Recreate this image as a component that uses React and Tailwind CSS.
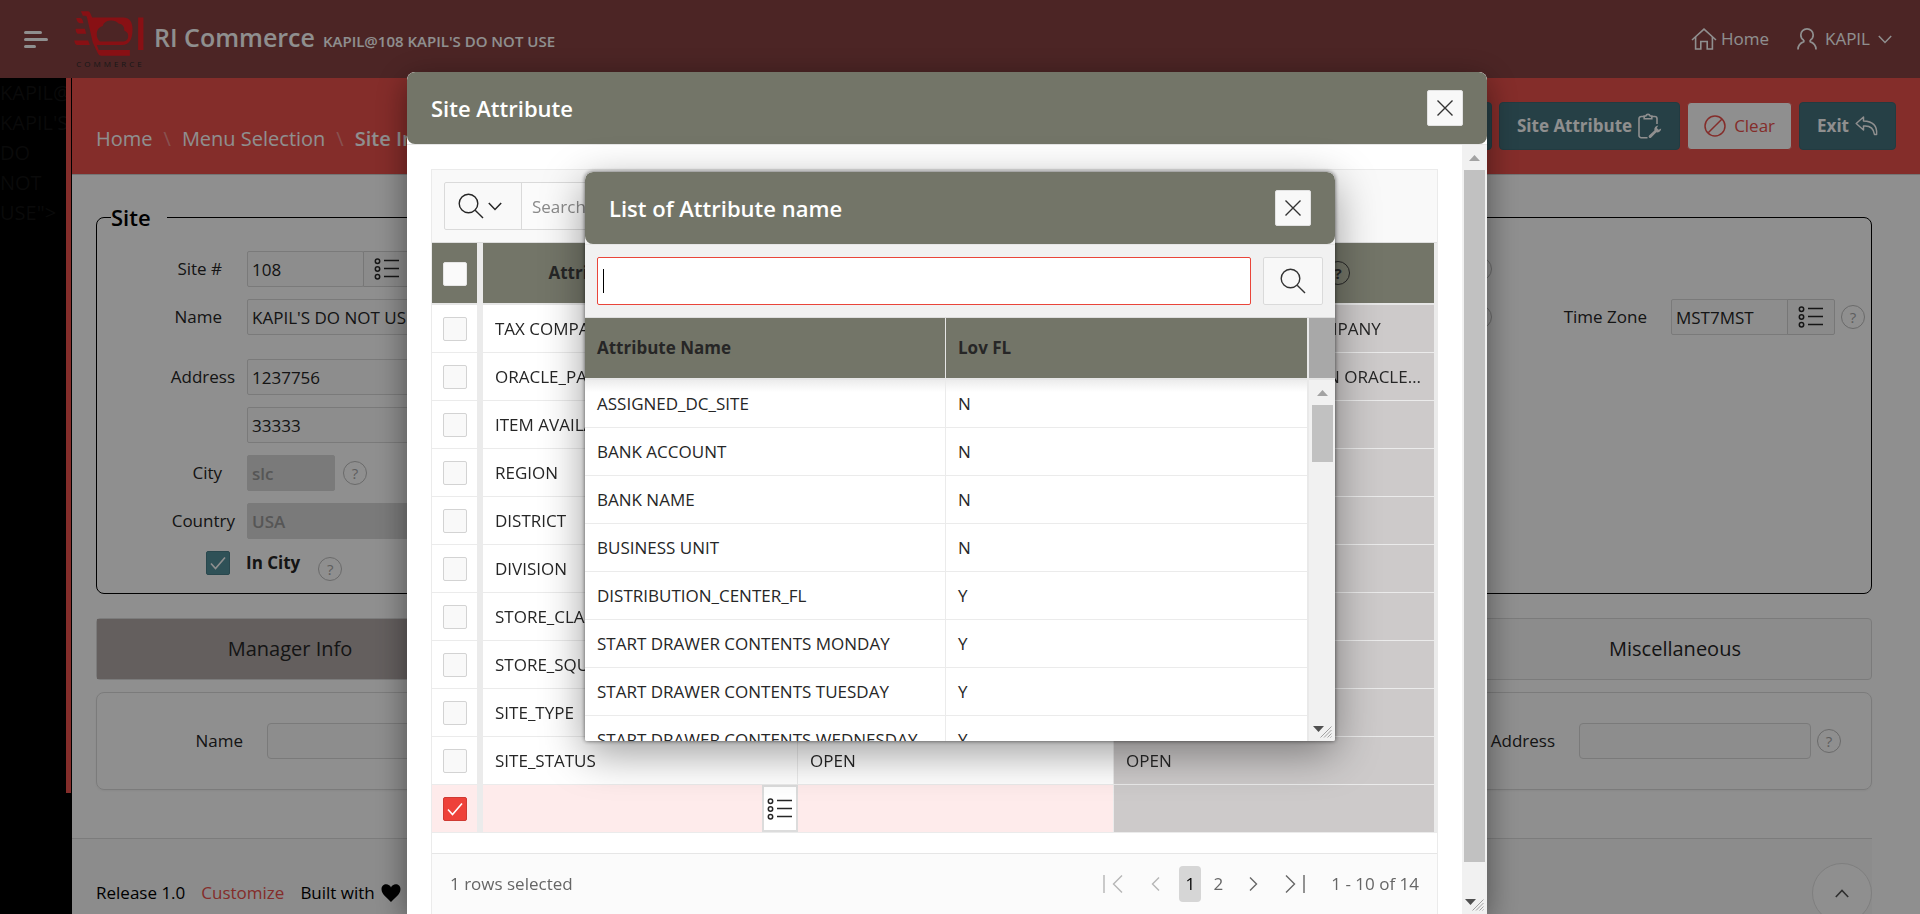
import React from 'react';

const Svg = ({ w, h, sw = 1.4, className = '', children }) => (
  <svg
    width={w}
    height={h}
    viewBox={`0 0 ${w} ${h}`}
    fill="none"
    stroke="currentColor"
    strokeWidth={sw}
    className={`shrink-0 ${className}`}
    aria-hidden="true"
  >
    {children}
  </svg>
);

const ListIcon = () => (
  <Svg w={26} h={22} sw={1.5}>
    <circle cx="3.5" cy="3.2" r="2.2" />
    <circle cx="3.5" cy="11" r="2.2" />
    <circle cx="3.5" cy="18.8" r="2.2" />
    <path d="M10 2.5H25M10 10.5H25M10 18.5H25" />
  </Svg>
);

const SearchIcon = () => (
  <Svg w={26} h={26} sw={1.4}>
    <circle cx="10.5" cy="10.5" r="9.3" />
    <path d="M17.2 17.2 25 25" />
  </Svg>
);

const CloseIcon = () => (
  <Svg w={16} h={16} sw={1.4}>
    <path d="M0.5 0.5 15.5 15.5M15.5 0.5 0.5 15.5" />
  </Svg>
);

const ChevronDown = () => (
  <Svg w={14} h={9} sw={1.5}>
    <path d="M0.8 1 7 7.5 13.2 1" />
  </Svg>
);

const HomeIcon = () => (
  <Svg w={26} h={22} sw={1.6}>
    <path d="M1 12 13 1.2 25 12" />
    <path d="M4.6 9V21H9.8V13.5H16.2V21H21.4V9" />
  </Svg>
);

const UserIcon = () => (
  <Svg w={20} h={22} sw={1.7}>
    <path d="M6.8 12.2C4.6 10.8 3.8 8.8 3.8 6.9A6.2 6 0 0 1 16.2 6.9C16.2 8.8 15.4 10.8 13.2 12.2" />
    <path d="M1 21.5C1 17 3.2 15 6.8 13.6V12M19 21.5C19 17 16.8 15 13.2 13.6V12" />
  </Svg>
);

const ClipboardIcon = () => (
  <Svg w={24} h={26} sw={1.6}>
    <path d="M6 3.5H3.2A2.2 2.2 0 0 0 1 5.7V22.5A2.2 2.2 0 0 0 3.2 24.7H9.5" />
    <path d="M14 3.5H16.8A2.2 2.2 0 0 1 19 5.7V11" />
    <path d="M6.2 5.8V3H7.8A2.3 2.3 0 0 1 12.2 3H13.8V5.8Z" />
    <path
      d="M11 22.6 16.4 17.4A4 4 0 0 1 20.3 12.4L18.8 15 20.6 16.8 23.2 15.4A4 4 0 0 1 18.4 19.3L13 24.8A1.5 1.5 0 0 1 11 22.6Z"
      fill="currentColor"
      stroke="none"
    />
  </Svg>
);

const BanIcon = () => (
  <Svg w={22} h={22} sw={1.5}>
    <circle cx="11" cy="11" r="10" />
    <path d="M4.2 17.8 17.8 4.2" />
  </Svg>
);

const ReplyIcon = () => (
  <Svg w={23} h={20} sw={1.5}>
    <path
      d="M8.5 1 1.2 7.5 8.5 14V10C13.5 9.5 18.5 11 19.5 18.5H21.6C22.4 10 18 5.2 8.5 5Z"
      strokeLinejoin="round"
    />
  </Svg>
);

const CheckIcon = () => (
  <Svg w={16} h={14} sw={1.6} className="pointer-events-none col-start-1 row-start-1">
    <path d="M1 7.5 5.5 12.5 15 1.5" />
  </Svg>
);

const Grip = () => (
  <Svg w={12} h={12} sw={1} className="text-neutral-400">
    <path d="M0.5 11.5 11.5 0.5M4 11.5 11.5 4M7.5 11.5 11.5 7.5M10.5 11.5 11.5 10.5" />
  </Svg>
);

const Logo = () => (
  <div className="flex w-[70px] shrink-0 flex-col items-center">
    <svg width="70" height="45" viewBox="42 33 210 136" aria-hidden="true" fill="#f21d24">
      <path
        fillRule="evenodd"
        d="M62 34H84Q88 34 90 39L96 53H190Q218 53 218 90Q218 136 186 136H110L116 151H210V168H124Q117 168 114 162L98 128L80 50Q79 47 74 47H68ZM120 125H192Q206 122 205 106Q204 97 193 92Q194 74 176 71Q166 60 150 62Q132 64 128 78Q112 82 110 100Q109 117 120 125Z"
      />
      <path d="M48 54H60Q65 54 67 60L70 70H60Q50 69 48 54ZM46 87H74L78 102H52Q46 98 46 87ZM42 122H84L89 136H50Q44 134 42 122ZM235 53H251V151H235Z" />
    </svg>
    <span className="mt-1 pl-[3px] text-[8px] leading-[8px] tracking-[3px] text-[#2c2c2c]">COMMERCE</span>
  </div>
);

const HelpButton = ({ className = '', tone = 'border-[#bdbdbd] text-[#a8a8a8]' }) => (
  <button
    type="button"
    aria-label="Help"
    className={`grid size-6 shrink-0 place-items-center rounded-full border text-[15px] leading-none ${tone} ${className}`}
  >
    ?
  </button>
);

const Field = ({ id, label, value = '', wide, disabled, width, lov, help, className = '' }) => (
  <div className={`flex items-center ${className}`}>
    <label htmlFor={id} className={`w-[124px] shrink-0 text-right ${wide ? '' : 'pr-[13px]'}`}>
      {label}
    </label>
    <div className={`ml-3 flex ${width}`}>
      <input
        id={id}
        defaultValue={value}
        disabled={disabled}
        className={
          disabled
            ? 'h-9 w-full min-w-0 rounded-xs border border-[#dadada] bg-[#dadada] px-1 font-semibold text-[#999]'
            : 'h-9 w-full min-w-0 rounded-xs border border-[#dadada] bg-[#fbfbfb] px-1'
        }
      />
      {lov && (
        <button
          type="button"
          aria-label={`${label} list`}
          className="-ml-px grid h-9 w-12 shrink-0 place-items-center rounded-r-xs border border-[#d4d4d4] bg-[#f8f8f8]"
        >
          <ListIcon />
        </button>
      )}
    </div>
    {help && <HelpButton className="ml-2" />}
  </div>
);

const Checkbox = ({ id, label, checked, tone }) => (
  <span className="inline-grid shrink-0 place-items-center align-middle text-white">
    <input
      id={id}
      type="checkbox"
      aria-label={label}
      defaultChecked={checked}
      className={`col-start-1 row-start-1 size-6 appearance-none rounded-xs border ${tone}`}
    />
    {checked && <CheckIcon />}
  </span>
);

const ScrollBar = ({ thumb, className = '' }) => (
  <div className={`flex shrink-0 flex-col items-center bg-[#f1f1f1] ${className}`} aria-hidden="true">
    <span className="grid h-[25px] w-full shrink-0 place-items-center text-[#a3a3a3]">
      <svg width="11" height="6" viewBox="0 0 11 6" fill="currentColor">
        <path d="M5.5 0 11 6H0Z" />
      </svg>
    </span>
    <div className={`w-[21px] bg-[#c1c1c1] ${thumb}`} />
    <div className="mt-auto flex shrink-0 self-end pr-[3px] pb-[3px]">
      <svg width="11" height="6" viewBox="0 0 11 6" fill="#505050" className="-mr-1">
        <path d="M0 0H11L5.5 6Z" />
      </svg>
      <Grip />
    </div>
  </div>
);

const DialogHeader = ({ title }) => (
  <div className="border-b border-[#e6e6e6]">
    <div className="flex h-[72px] items-center justify-between rounded-lg bg-[#737568] px-6">
      <h2 className="text-[22px] leading-7 font-semibold text-white">{title}</h2>
      <button
        type="button"
        aria-label={`Close ${title}`}
        className="grid size-9 place-items-center rounded-xs border border-[#e2e2e2] bg-[#f8f8f8] text-[#333]"
      >
        <CloseIcon />
      </button>
    </div>
  </div>
);

const siteRows = [
  ['TAX COMPANY', '101', 'RICS DEFAULT STORE COMPANY'],
  ['ORACLE_PARTY_ID', '4021', 'PARTY CODE IDENTIFIER IN ORACLE FINANCIALS'],
  ['ITEM AVAILABILITY', '', ''],
  ['REGION', '', ''],
  ['DISTRICT', '', ''],
  ['DIVISION', '', ''],
  ['STORE_CLASS', '', ''],
  ['STORE_SQUARE_FT', '', ''],
  ['SITE_TYPE', '', ''],
  ['SITE_STATUS', 'OPEN', 'OPEN'],
];

const lovRows = [
  ['ASSIGNED_DC_SITE', 'N'],
  ['BANK ACCOUNT', 'N'],
  ['BANK NAME', 'N'],
  ['BUSINESS UNIT', 'N'],
  ['DISTRIBUTION_CENTER_FL', 'Y'],
  ['START DRAWER CONTENTS MONDAY', 'Y'],
  ['START DRAWER CONTENTS TUESDAY', 'Y'],
  ['START DRAWER CONTENTS WEDNESDAY', 'Y'],
];

const boxTone = 'border-[#d3d3d3] bg-[#f9f9f9]';
const darkHelp = 'border-[#262626] text-[#262626]';

function TopBar() {
  return (
    <header className="flex h-[78px] shrink-0 items-center bg-[#884242] pr-7 pl-6 text-white">
      <button type="button" aria-label="Toggle navigation" className="mr-[26px] flex w-6 flex-col gap-1">
        <span className="h-[3px] w-[18px] rounded-full bg-white" />
        <span className="h-[3px] w-6 rounded-full bg-white" />
        <span className="h-[3px] w-3 rounded-full bg-white" />
      </button>
      <Logo />
      <div className="ml-2.5 flex items-baseline gap-2 pb-1 font-semibold">
        <span className="text-[25px] leading-8">RI Commerce</span>
        <span className="text-[15px]">KAPIL@108 KAPIL'S DO NOT USE</span>
      </div>
      <nav className="ml-auto flex items-center gap-7">
        <a href="#home" className="flex items-center gap-1">
          <HomeIcon />
          Home
        </a>
        <button type="button" className="flex items-center gap-2">
          <UserIcon />
          KAPIL
          <ChevronDown />
        </button>
      </nav>
    </header>
  );
}

function BreadcrumbBar() {
  const solid =
    'flex h-12 items-center gap-1.5 rounded-sm border border-[#3d6a75] bg-[#44727d] px-[17px] font-bold text-white';
  return (
    <div className="flex h-24 shrink-0 items-start justify-between bg-[#ec504b] px-6 pt-6 text-white">
      <nav aria-label="Breadcrumb" className="flex gap-[11px] pt-[21px] text-xl leading-8">
        <a href="#home">Home</a>
        <span className="text-white/40">\</span>
        <a href="#menu">Menu Selection</a>
        <span className="text-white/40">\</span>
        <span className="font-semibold">Site Information</span>
      </nav>
      <div className="flex gap-[7px]">
        <button type="button" className={solid}>
          Save
        </button>
        <button type="button" className={solid}>
          Site Attribute
          <ClipboardIcon />
        </button>
        <button
          type="button"
          className="flex h-12 items-center gap-2 rounded-sm border border-[#ec504b] bg-white px-4 text-[#ec504b]"
        >
          <BanIcon />
          Clear
        </button>
        <button type="button" className={solid}>
          Exit
          <ReplyIcon />
        </button>
      </div>
    </div>
  );
}

function SiteForm() {
  return (
    <fieldset className="rounded-lg border border-black pr-1.5 pb-3 pl-[14px]">
      <legend className="pr-4 text-[22px] leading-7 font-semibold text-black">Site</legend>
      <div className="flex pt-5">
        <div className="flex flex-1 flex-col">
          <Field id="site-no" label="Site #" value="108" width="w-[164px]" lov />
          <Field id="site-name" label="Name" value="KAPIL'S DO NOT USE" width="w-80" className="mt-3" />
          <Field id="addr1" label="Address" value="1237756" width="w-80" wide className="mt-6" />
          <Field id="addr2" label="" value="33333" width="w-80" className="mt-3" />
          <Field id="city" label="City" value="slc" width="w-[88px]" disabled help className="mt-3" />
          <Field id="country" label="Country" value="USA" width="w-80" wide disabled className="mt-3" />
          <div className="mt-3 flex h-[30px] items-start pl-[95px]">
            <Checkbox id="in-city" checked tone="border-[#4a7f8a] bg-[#55919c]" />
            <label htmlFor="in-city" className="ml-4 font-bold">
              In City
            </label>
            <HelpButton className="ml-[18px] self-end" />
          </div>
        </div>
        <div className="mt-1.5 flex flex-col gap-6">
          <HelpButton />
          <HelpButton />
        </div>
        <div className="mt-12 ml-[72px] flex h-9 items-center">
          <label htmlFor="tz">Time Zone</label>
          <input
            id="tz"
            defaultValue="MST7MST"
            className="ml-6 h-9 w-[117px] rounded-l-xs border border-[#dadada] bg-[#fbfbfb] px-1"
          />
          <button
            type="button"
            aria-label="Time Zone list"
            className="-ml-px mr-1.5 grid h-9 w-12 place-items-center rounded-r-xs border border-[#d4d4d4] bg-[#f8f8f8]"
          >
            <ListIcon />
          </button>
          <HelpButton />
        </div>
      </div>
    </fieldset>
  );
}

function PageContent() {
  return (
    <main className="flex-1 bg-white px-6 pt-7">
      <SiteForm />
      <div className="mt-6 flex rounded-sm border border-[#dcdcdc] bg-[#fafafa] text-xl" role="tablist">
        <button type="button" role="tab" aria-selected="true" className="h-[60px] w-[386px] bg-[#b2a9a8]">
          Manager Info
        </button>
        <button type="button" role="tab" aria-selected="false" className="ml-auto h-[60px] w-[392px]">
          Miscellaneous
        </button>
      </div>
      <div className="mt-3 flex h-[98px] items-center justify-between rounded-lg border border-[#dcdcdc] pr-[30px] shadow-xs">
        <div className="flex items-center">
          <label htmlFor="mgr" className="w-[146px] text-right">
            Name
          </label>
          <input id="mgr" className="ml-6 h-9 w-56 rounded-sm border border-[#dadada] bg-[#fbfbfb] px-1" />
        </div>
        <div className="flex items-center">
          <label htmlFor="mgr-address">Address</label>
          <input id="mgr-address" className="mr-1.5 ml-6 h-9 w-[232px] rounded-sm border border-[#dadada] bg-[#fbfbfb] px-1" />
          <HelpButton />
        </div>
      </div>
      <footer className="mt-12 -ml-6 flex h-32 items-start gap-4 border-t border-[#dedede] bg-[#f9f9f9] pt-6 pl-6 text-black">
        <span className="mt-[18px]">Release 1.0</span>
        <a href="#customize" className="mt-[18px] text-[#ec504b]">
          Customize
        </a>
        <span className="mt-[18px] flex items-center gap-1.5">
          Built with
          <svg width="20" height="18" viewBox="0 0 20 18" aria-hidden="true">
            <path d="M10 18C7 14.5 0.5 10.5 0.5 5.2C0.5 2.2 2.7 0.3 5.2 0.3C7.3 0.3 9.2 1.6 10 3.4C10.8 1.6 12.7 0.3 14.8 0.3C17.3 0.3 19.5 2.2 19.5 5.2C19.5 10.5 13 14.5 10 18Z" />
          </svg>
        </span>
        <button
          type="button"
          aria-label="Scroll to top"
          className="ml-auto grid size-[60px] place-items-center rounded-full border border-[#e2e2e2] bg-white text-[#555]"
        >
          <Svg w={14} h={9} sw={1.6}>
            <path d="M0.8 8 7 1.5 13.2 8" />
          </Svg>
        </button>
      </footer>
    </main>
  );
}

function AttributeDialog() {
  const th = 'h-[62px] border-b-2 border-[#e6e6e6] bg-[#737568] bg-clip-padding font-bold text-[#262626]';
  const td = 'h-12 truncate border-b border-[#ebebeb] px-3';
  const tick = 'h-12 border-b border-[#ebebeb] text-center';
  const sep = 'border-0 bg-[#ebebeb]';
  return (
    <section
      role="dialog"
      aria-label="Site Attribute"
      className="flex h-full w-[1080px] max-w-full flex-col overflow-hidden rounded-t-lg bg-white shadow-[0_8px_32px_rgba(0,0,0,0.45)]"
    >
      <DialogHeader title="Site Attribute" />
      <div className="flex min-h-0 flex-1">
        <div className="min-w-0 flex-1 overflow-hidden px-6 pt-6">
          <div className="border border-[#ebebeb]">
            <div className="flex border-b border-[#dedede] bg-[#f9f9f9] p-3">
              <button
                type="button"
                aria-label="Select columns to search"
                className="flex h-12 w-[78px] items-center justify-center gap-1 rounded-l-xs border border-[#dadada] pr-1.5"
              >
                <SearchIcon />
                <ChevronDown />
              </button>
              <input
                aria-label="Search"
                placeholder="Search: All Text Columns"
                className="-ml-px h-12 w-80 border border-[#dadada] bg-[#fbfbfb] px-2.5 placeholder:text-[#8a8a8a]"
              />
            </div>
            <div className="flex bg-[#ebebeb]">
              <table className="w-full table-fixed border-separate border-spacing-0">
                <colgroup>
                  <col className="w-[45px]" />
                  <col className="w-[6px]" />
                  <col className="w-[315px]" />
                  <col className="w-[316px]" />
                  <col />
                </colgroup>
                <thead>
                  <tr>
                    <th className={`${th} text-center`}>
                      <Checkbox label="Select all" tone="border-[#e6e6e6] bg-[#fafafa]" />
                    </th>
                    <th className={sep} aria-hidden="true" />
                    <th className={th}>
                      <span className="mx-auto flex w-[184px] items-center justify-between">
                        Attribute Name
                        <HelpButton tone={darkHelp} />
                      </span>
                    </th>
                    <th className={th}>Attribute Value</th>
                    <th className={th}>
                      <span className="mx-auto flex w-[152px] items-center justify-between">
                        Description
                        <HelpButton tone={darkHelp} />
                      </span>
                    </th>
                  </tr>
                </thead>
                <tbody>
                  {siteRows.map(([name, value, desc]) => (
                    <tr key={name} className="bg-white">
                      <td className={tick}>
                        <Checkbox label={`Select ${name}`} tone={boxTone} />
                      </td>
                      <td className={sep} />
                      <td className={`${td} border-r`}>{name}</td>
                      <td className={`${td} border-r`}>{value}</td>
                      <td className={`${td} bg-[#cdcaca]`}>{desc}</td>
                    </tr>
                  ))}
                  <tr className="bg-[#feebeb]">
                    <td className={tick}>
                      <Checkbox label="Select new row" checked tone="border-[#cf3a33] bg-[#ee4139]" />
                    </td>
                    <td className={sep} />
                    <td className="h-12 border-b border-[#ebebeb] p-0">
                      <button
                        type="button"
                        aria-label="Attribute name list"
                        className="ml-auto grid h-[47px] w-9 place-items-center border-2 border-[#dcdcdc] bg-white"
                      >
                        <ListIcon />
                      </button>
                    </td>
                    <td className={`${td} border-r`} />
                    <td className={`${td} bg-[#cdcaca]`} />
                  </tr>
                </tbody>
              </table>
              <div className="w-[3px] shrink-0" />
            </div>
            <div className="bg-white pt-5">
              <div className="flex h-24 items-start border-t border-[#e6e6e6] bg-[#fbfbfb] px-[18px] pt-3 text-[#666]">
                <span className="leading-9">1 rows selected</span>
                <nav aria-label="Pagination" className="ml-auto flex items-center gap-1.5">
                  <button type="button" aria-label="First page" disabled className="grid h-9 w-9 place-items-center text-[#b5b5b5]">
                    <Svg w={20} h={18}>
                      <path d="M1 0V18M19 0.5 10.5 9 19 17.5" />
                    </Svg>
                  </button>
                  <button type="button" aria-label="Previous page" disabled className="grid h-9 w-9 place-items-center text-[#b5b5b5]">
                    <Svg w={9} h={14}>
                      <path d="M8 0.5 1.5 7 8 13.5" />
                    </Svg>
                  </button>
                  <button type="button" className="h-9 w-[22px] rounded-sm bg-[#d6d6d6] text-black">
                    1
                  </button>
                  <button type="button" className="h-9 w-[22px]">
                    2
                  </button>
                  <button type="button" aria-label="Next page" className="grid h-9 w-9 place-items-center">
                    <Svg w={9} h={14}>
                      <path d="M1 0.5 7.5 7 1 13.5" />
                    </Svg>
                  </button>
                  <button type="button" aria-label="Last page" className="grid h-9 w-9 place-items-center">
                    <Svg w={20} h={18}>
                      <path d="M1 0.5 9.5 9 1 17.5M19 0V18" />
                    </Svg>
                  </button>
                  <span className="ml-3">1 - 10 of 14</span>
                </nav>
              </div>
            </div>
          </div>
        </div>
        <ScrollBar className="w-[25px]" thumb="h-[90%]" />
      </div>
    </section>
  );
}

function AttributeListDialog() {
  const th =
    'h-[62px] border-b-2 border-[#e6e6e6] bg-[#737568] bg-clip-padding px-3 text-left font-bold text-[#262626]';
  return (
    <section
      role="dialog"
      aria-label="List of Attribute name"
      className="flex h-[569px] w-[750px] max-w-full flex-col overflow-hidden rounded-t-lg rounded-b-xs bg-[#f1f1f1] shadow-[0_12px_44px_rgba(0,0,0,0.4),0_0_4px_rgba(0,0,0,0.6)]"
    >
      <DialogHeader title="List of Attribute name" />
      <div className="flex gap-3 border-b border-[#dedede] p-3">
        <div className="relative flex-1">
          <input aria-label="Search attribute name" className="h-12 w-full rounded-xs border border-[#e9453a] bg-white px-1.5" />
          <span className="absolute top-3 left-1.5 h-6 w-px bg-black" />
        </div>
        <button
          type="button"
          aria-label="Search"
          className="grid h-12 w-[60px] place-items-center rounded-xs border border-[#dadada] bg-[#f8f8f8] text-[#333]"
        >
          <SearchIcon />
        </button>
      </div>
      <div className="flex min-h-0 flex-1">
        <div className="min-w-0 flex-1 overflow-hidden bg-white">
          <table className="w-full table-fixed border-separate border-spacing-0">
            <colgroup>
              <col className="w-[361px]" />
              <col />
            </colgroup>
            <thead>
              <tr>
                <th className={`${th} border-r`}>Attribute Name</th>
                <th className={th}>Lov FL</th>
              </tr>
            </thead>
            <tbody>
              {lovRows.map(([name, flag], i) => (
                <tr key={name} className={i === 0 ? 'bg-linear-to-b from-[#ececec] to-white to-25%' : 'bg-white'}>
                  <td className="h-12 border-r border-b border-[#ebebeb] px-3">{name}</td>
                  <td className="h-12 border-b border-[#ebebeb] px-3">{flag}</td>
                </tr>
              ))}
            </tbody>
          </table>
        </div>
        <div className="flex w-7 shrink-0 flex-col border-l-2 border-[#e9e9e9]">
          <div className="h-[62px] shrink-0 border-b-2 border-[#e6e6e6] bg-[#a8a8a8]" />
          <ScrollBar className="flex-1" thumb="h-[57px]" />
        </div>
      </div>
    </section>
  );
}

export default function App() {
  return (
    <div className="relative flex h-screen flex-col overflow-hidden bg-white font-['Open_Sans',sans-serif] text-[17px] leading-6 text-[#262626]">
      <TopBar />
      <div className="flex min-h-0 flex-1">
        <aside className="flex w-[72px] shrink-0 bg-black">
          <div className="w-[66px] overflow-hidden text-xl leading-[30px] text-[#121212]">
            KAPIL@ KAPIL'S DO NOT USE"&gt;
          </div>
          <div className="h-[715px] w-[5px] bg-[#ec504b]" />
        </aside>
        <div className="flex min-w-0 flex-1 flex-col">
          <BreadcrumbBar />
          <div className="flex flex-1 border-t border-[#d0d0d0] pr-6">
            <PageContent />
          </div>
        </div>
      </div>

      <div className="fixed inset-0 z-10 flex items-stretch justify-center bg-black/44 pt-[72px] pr-[26px]">
        <AttributeDialog />
      </div>
      <div className="fixed inset-0 z-20 flex items-start justify-center pt-[172px]">
        <AttributeListDialog />
      </div>
    </div>
  );
}
